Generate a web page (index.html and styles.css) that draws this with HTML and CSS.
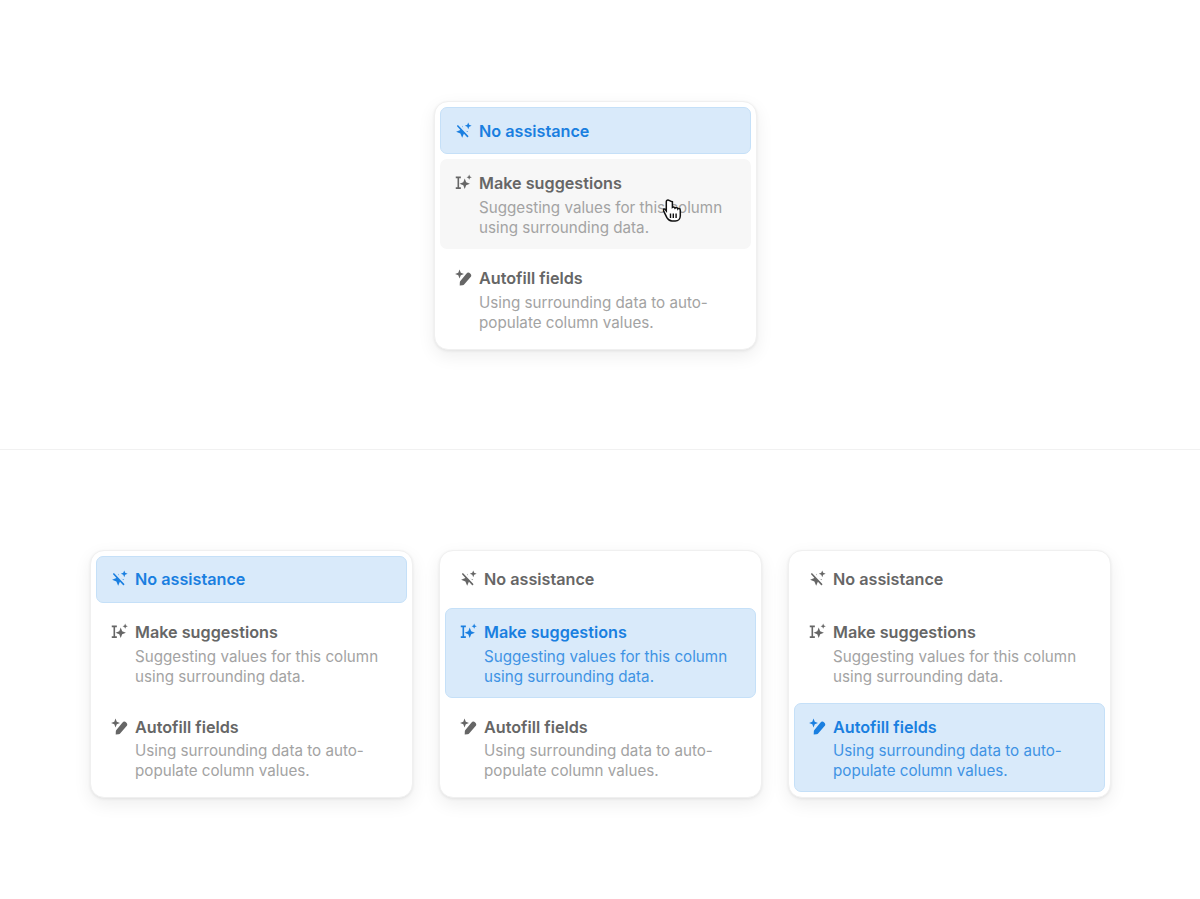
FILE: index.html
```html
<!DOCTYPE html>
<html lang="en">
<head>
    <meta charset="UTF-8">
    <title>Assistance menu</title>
    <link rel="stylesheet" href="styles.css">
</head>
<body>
    <svg class="defs" width="0" height="0">
        <symbol id="i-none" viewBox="0 0 18 18">
            <path d="M7.600 4l1.900 4.500 4.500 1.900-4.500 1.900-1.900 4.500-1.900-4.500-4.500-1.900 4.500-1.900z" fill="currentColor"/>
            <path d="M4 3.200l10.300 11" fill="none" stroke="var(--cut)" stroke-width="3"/>
            <path d="M3 4.200l10.300 11" fill="none" stroke="currentColor" stroke-width="1.700" stroke-linecap="round"/>
            <path d="M14 .4l1 2.600 2.600 1-2.600 1-1 2.600-1-2.600-2.600-1 2.600-1z" fill="currentColor"/>
        </symbol>
        <symbol id="i-suggest" viewBox="0 0 18 18">
            <path d="M.8 3.600h5.400M.8 15h5.400M3.500 3.600V15" fill="none" stroke="currentColor" stroke-width="1.700"/>
            <path d="M10.300 4.800l1.500 4 4 1.500-4 1.500-1.500 4-1.500-4-4-1.500 4-1.500z" fill="currentColor"/>
            <path d="M15 .6l.8 2 2 .8-2 .8-.8 2-.8-2-2-.8 2-.8z" fill="currentColor"/>
        </symbol>
        <symbol id="i-fill" viewBox="0 0 18 18">
            <path d="M4.800 .6l1.300 3.400 3.400 1.300-3.400 1.300-1.300 3.400-1.300-3.400-3.400-1.300 3.400-1.300z" fill="currentColor"/>
            <path d="M12 4.900a2.900 2.900 0 0 1 4.300 3.900l-6.400 7.400a2.800 2.800 0 0 1-1.900 1l-3 .2.100-3.100a2.800 2.800 0 0 1 .8-1.900z" fill="currentColor"/>
        </symbol>
    </svg>

    <section class="top">
        <div class="menu">
            <div class="item selected">
                <svg class="icon"><use href="#i-none"/></svg>
                <div class="title">No assistance</div>
            </div>
            <div class="item hover">
                <svg class="icon"><use href="#i-suggest"/></svg>
                <div>
                    <div class="title">Make suggestions</div>
                    <div class="desc">Suggesting values for this column<br>using surrounding data.</div>
                </div>
                <svg class="cursor" width="20" height="24" viewBox="0 0 20 24">
                    <path d="M5 1c-1 0-1.700.8-1.700 1.800v9L2.400 10.700C1.700 9.800.7 9.700.4 10.200c-.3.400-.2 1 .2 1.700l3.300 6.800c1 1.800 2.500 3.300 5 3.300h3.400c3 0 5-2.200 5-5.300v-5.500c0-1-.7-1.700-1.500-1.700-.4 0-.8.100-1 .4-.2-.8-.9-1.300-1.600-1.300-.5 0-.9.200-1.200.5-.3-.7-.9-1.100-1.600-1.100-.4 0-.7.100-1 .3V2.800C6.700 1.800 5.900 1 5 1z" fill="#fff" stroke="#111" stroke-width="1.500"/>
                    <path d="M7.500 14.500v4.500M10.300 14.500v4.500M13.100 14.500v4.500" stroke="#111" stroke-width="1.400"/>
                </svg>
            </div>
            <div class="item">
                <svg class="icon"><use href="#i-fill"/></svg>
                <div>
                    <div class="title">Autofill fields</div>
                    <div class="desc">Using surrounding data to auto-<br>populate column values.</div>
                </div>
            </div>
        </div>
    </section>

    <section class="bottom">
        <div class="menu">
            <div class="item selected">
                <svg class="icon"><use href="#i-none"/></svg>
                <div class="title">No assistance</div>
            </div>
            <div class="item">
                <svg class="icon"><use href="#i-suggest"/></svg>
                <div>
                    <div class="title">Make suggestions</div>
                    <div class="desc">Suggesting values for this column<br>using surrounding data.</div>
                </div>
            </div>
            <div class="item">
                <svg class="icon"><use href="#i-fill"/></svg>
                <div>
                    <div class="title">Autofill fields</div>
                    <div class="desc">Using surrounding data to auto-<br>populate column values.</div>
                </div>
            </div>
        </div>
        <div class="menu">
            <div class="item">
                <svg class="icon"><use href="#i-none"/></svg>
                <div class="title">No assistance</div>
            </div>
            <div class="item selected">
                <svg class="icon"><use href="#i-suggest"/></svg>
                <div>
                    <div class="title">Make suggestions</div>
                    <div class="desc">Suggesting values for this column<br>using surrounding data.</div>
                </div>
            </div>
            <div class="item">
                <svg class="icon"><use href="#i-fill"/></svg>
                <div>
                    <div class="title">Autofill fields</div>
                    <div class="desc">Using surrounding data to auto-<br>populate column values.</div>
                </div>
            </div>
        </div>
        <div class="menu">
            <div class="item">
                <svg class="icon"><use href="#i-none"/></svg>
                <div class="title">No assistance</div>
            </div>
            <div class="item">
                <svg class="icon"><use href="#i-suggest"/></svg>
                <div>
                    <div class="title">Make suggestions</div>
                    <div class="desc">Suggesting values for this column<br>using surrounding data.</div>
                </div>
            </div>
            <div class="item selected">
                <svg class="icon"><use href="#i-fill"/></svg>
                <div>
                    <div class="title">Autofill fields</div>
                    <div class="desc">Using surrounding data to auto-<br>populate column values.</div>
                </div>
            </div>
        </div>
    </section>
</body>
</html>
```

FILE: styles.css
```css
* {
    box-sizing: border-box;
}

body {
    margin: 0;
    height: 899px;
    overflow: hidden;
    background: #fff;
    font-family: Inter, "Liberation Sans", sans-serif;
}

.defs {
    display: block;
}

.top {
    height: 450px;
    padding-top: 101px;
    padding-left: 434px;
    border-bottom: 1px solid #f1f1f1;
}

.bottom {
    display: flex;
    gap: 26px;
    padding-top: 100px;
    padding-left: 90px;
}

.menu {
    display: flex;
    flex-direction: column;
    gap: 5px;
    width: 323px;
    padding: 5px;
    background: #fff;
    border: 1px solid #f0f0f0;
    border-radius: 14px;
    box-shadow: 0 1px 3px rgba(0,0,0,0.07), 0 6px 18px rgba(0,0,0,0.07);
}

.item {
    position: relative;
    display: flex;
    gap: 7px;
    min-height: 47px;
    padding: 13px 14px 10px;
    border: 1px solid transparent;
    border-radius: 7px;
    color: #666;
    --cut: #fff;
}

.item.hover {
    background: #f7f7f7;
}

.item.selected {
    background: #d9eafa;
    border-color: #c5e0f8;
    color: #1a7fe0;
    --cut: #d9eafa;
}

.icon {
    flex: none;
    width: 17px;
    height: 17px;
    margin-top: 1px;
}

.title {
    font-size: 16.2px;
    font-weight: 600;
    line-height: 20px;
}

.desc {
    margin-top: 5px;
    font-size: 15.2px;
    line-height: 20px;
    color: #a3a3a3;
}

.selected .desc {
    color: #3f93e4;
}

.bottom .item:first-child {
    padding-top: 12px;
}

.bottom .desc {
    margin-top: 4.5px;
}

.cursor {
    position: absolute;
    left: 222px;
    top: 39px;
}
```
